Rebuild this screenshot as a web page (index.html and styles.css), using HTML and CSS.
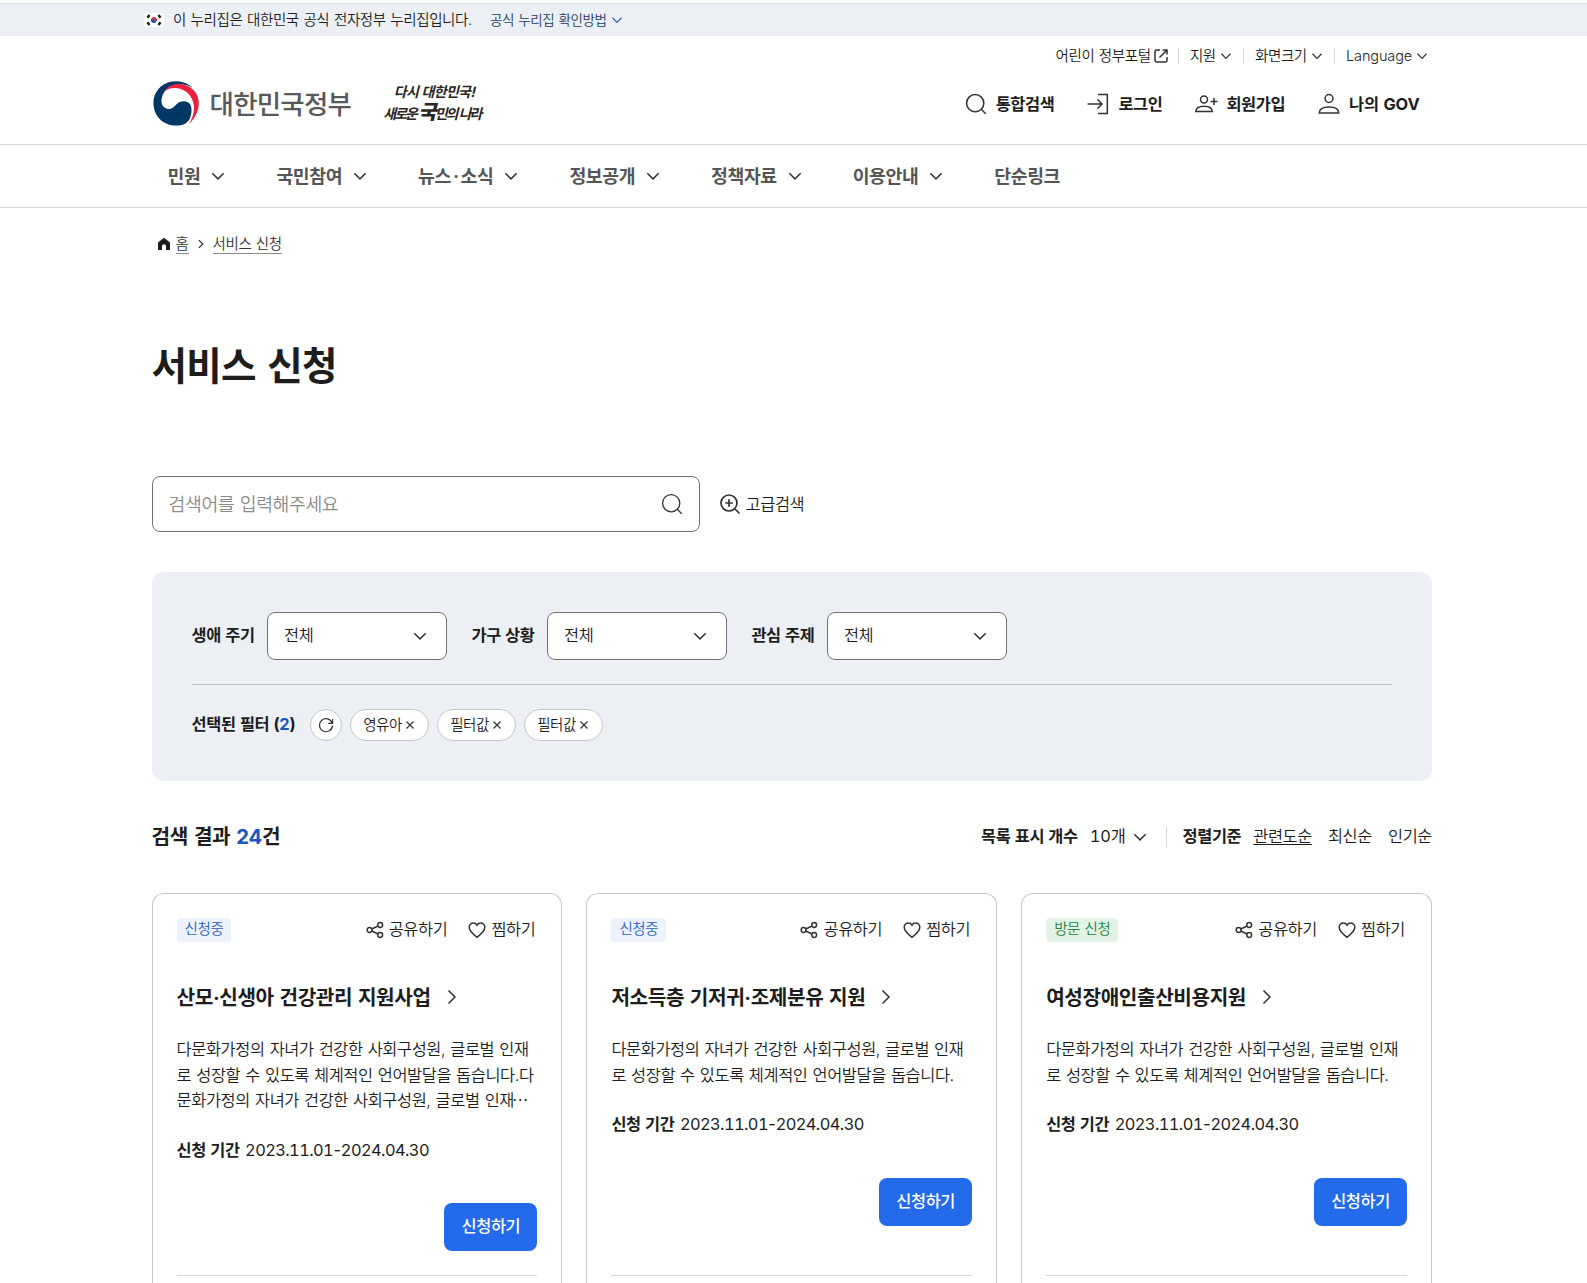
FILE: index.html
```html
<!DOCTYPE html>
<html lang="ko">
<head>
<meta charset="utf-8">
<title>서비스 신청</title>
<link rel="stylesheet" href="styles.css">
</head>
<body>
<svg class="sprite" aria-hidden="true">
  <symbol id="down" viewBox="0 0 20 20"><path d="M4.3 7.2 10 12.9l5.700-5.700"/></symbol>
  <symbol id="right" viewBox="0 0 20 20"><path d="M6.500 3.500 13 10l-6.500 6.500"/></symbol>
  <symbol id="search" viewBox="0 0 24 24"><circle cx="11.200" cy="11.200" r="8.600"/><path d="m17.300 17.300 4.400 4.400"/></symbol>
  <symbol id="share" viewBox="0 0 20 20"><circle cx="4.600" cy="10" r="2.400"/><circle cx="15.200" cy="5" r="2.400"/><circle cx="15.200" cy="15" r="2.400"/><path d="m6.800 9 6.200-3M6.800 11l6.200 3"/></symbol>
  <symbol id="heart" viewBox="0 0 20 20"><path d="M10 17.300C7 15 2.200 11.400 2.200 7.300a4.100 4.100 0 0 1 4.200-4.200c1.500 0 2.800.8 3.600 2.100.8-1.300 2.100-2.100 3.600-2.100a4.100 4.100 0 0 1 4.200 4.200c0 4.100-4.800 7.700-7.800 10z"/></symbol>
  <symbol id="close" viewBox="0 0 10 10"><path d="m1.500 1.500 7 7m0-7-7 7"/></symbol>
</svg>

<div class="notice">
  <div class="notice-in">
    <svg class="flag" viewBox="0 0 20 14"><rect width="20" height="14" rx="2" fill="#fff"/><path d="M7.200 5.900a3 3 0 0 1 5.600 2.200C11.500 9 10.800 7.600 10 7s-2-1.500-2.800-1.100z" fill="#d5303e"/><path d="M7.200 5.900a3 3 0 0 0 5.600 2.200C11.500 9 10.800 7.600 10 7s-2-1.500-2.800-1.100z" fill="#1b4ea0"/><path d="m3.500 4.700 2-2.700M14.500 2l2 2.700M3.500 9.300l2 2.700M14.500 12l2-2.700" stroke="#222" stroke-width="2.600"/></svg>
    <span class="notice-text">이 누리집은 대한민국 공식 전자정부 누리집입니다.</span>
    <span class="notice-link">공식 누리집 확인방법</span>
    <svg class="ico i16 blue"><use href="#down"/></svg>
  </div>
</div>

<header class="header">
  <div class="wrap header-in">
    <div class="brand">
      <svg class="emblem" viewBox="0 0 139 137"><circle cx="69.500" cy="68.500" r="67.500" fill="#fff"/><path d="M100 124C82 136 52 136 30 122 7 107-3 78 2 52 9 22 34 1 68 1c20 0 36 7 49 19C84 2 48 9 33 33c-11 18-12 38 2 47 13 8 24 1 34-10 14-15 44-13 45 13 1 20-5 33-14 41z" fill="#003764"/><path d="M34 31C50 4 87 3 113 21c29 21 34 67-7 108 25-38 19-78-9-98C76 17 50 18 34 31z" fill="#ee1f3c"/></svg>
      <span class="brand-name">대한민국정부</span>
      <div class="slogan"><span class="slogan-a">다시 대한민국!</span><span class="slogan-b">새로운 <b>국</b>민의 나라</span></div>
    </div>
    <div class="tools">
      <div class="utils">
        <span class="util">어린이 정부포털<svg class="ico ext" viewBox="0 0 16 16"><path d="M7 2H3.500A1.500 1.500 0 0 0 2 3.500v9A1.500 1.500 0 0 0 3.500 14h9a1.500 1.500 0 0 0 1.500-1.500V9M9.500 2H14v4.500M14 2 6.500 9.500"/></svg></span>
        <span class="util">지원<svg class="ico i16"><use href="#down"/></svg></span>
        <span class="util">화면크기<svg class="ico i16"><use href="#down"/></svg></span>
        <span class="util">Language<svg class="ico i16"><use href="#down"/></svg></span>
      </div>
      <div class="actions">
        <span class="action"><svg class="ico i24"><use href="#search"/></svg>통합검색</span>
        <span class="action"><svg class="ico i24" viewBox="0 0 24 24"><path d="M12 2.500h9.300v19H12M1.500 12H16M11.300 7.300 16 12l-4.700 4.700"/></svg>로그인</span>
        <span class="action"><svg class="ico i24" viewBox="0 0 24 24"><circle cx="10" cy="7.500" r="3.500"/><path d="M1.800 19.500c0-3.800 3.300-5.300 8.200-5.300s8.200 1.500 8.200 5.300zM20 6v7M16.500 9.500h7"/></svg>회원가입</span>
        <span class="action gov"><svg class="ico i24" viewBox="0 0 24 24"><circle cx="12" cy="6.500" r="3.900"/><path d="M2.300 20.900c0-4.200 3.900-6 9.700-6s9.700 1.800 9.700 6z"/></svg>나의 GOV</span>
      </div>
    </div>
  </div>
</header>

<nav class="nav">
  <div class="wrap nav-in">
    <span class="nav-item">민원<svg class="ico i20"><use href="#down"/></svg></span>
    <span class="nav-item">국민참여<svg class="ico i20"><use href="#down"/></svg></span>
    <span class="nav-item"><span>뉴스<span class="dot">·</span>소식</span><svg class="ico i20"><use href="#down"/></svg></span>
    <span class="nav-item">정보공개<svg class="ico i20"><use href="#down"/></svg></span>
    <span class="nav-item">정책자료<svg class="ico i20"><use href="#down"/></svg></span>
    <span class="nav-item">이용안내<svg class="ico i20"><use href="#down"/></svg></span>
    <span class="nav-item">단순링크</span>
  </div>
</nav>

<main class="wrap">
  <div class="crumbs">
    <svg class="home" viewBox="0 0 14 14"><path d="M7 .8 1 5.600V13h4V9.200a2 2 0 0 1 4 0V13h4V5.600z"/></svg>
    <span class="crumb">홈</span>
    <svg class="ico i12"><use href="#right"/></svg>
    <span class="crumb">서비스 신청</span>
  </div>
  <h1 class="title">서비스 신청</h1>

  <div class="search-row">
    <div class="search-box"><span class="placeholder">검색어를 입력해주세요</span><svg class="ico i24 thin"><use href="#search"/></svg></div>
    <span class="advanced"><svg class="ico i24 adv" viewBox="0 0 24 24"><circle cx="11" cy="11" r="8"/><path d="m17 17 4.500 4.500M11 7.200v7.600M7.200 11h7.600"/></svg>고급검색</span>
  </div>

  <section class="filters">
    <div class="filter-row">
      <span class="label">생애 주기</span><div class="select">전체<svg class="ico i20"><use href="#down"/></svg></div>
      <span class="label">가구 상황</span><div class="select">전체<svg class="ico i20"><use href="#down"/></svg></div>
      <span class="label">관심 주제</span><div class="select">전체<svg class="ico i20"><use href="#down"/></svg></div>
    </div>
    <div class="chosen">
      <span class="label chosen-label">선택된 필터 (<em>2</em>)</span>
      <span class="reset"><svg class="ico i16" viewBox="0 0 16 16"><path d="M14.200 6.200A6.500 6.500 0 1 0 14.500 8.600M14.600 2v4.400h-4.400"/></svg></span>
      <span class="chip">영유아<svg class="ico i10"><use href="#close"/></svg></span>
      <span class="chip">필터값<svg class="ico i10"><use href="#close"/></svg></span>
      <span class="chip">필터값<svg class="ico i10"><use href="#close"/></svg></span>
    </div>
  </section>

  <div class="result-bar">
    <h2 class="count">검색 결과 <em>24</em>건</h2>
    <div class="result-opts">
      <span class="label">목록 표시 개수</span><span class="per">10개</span><svg class="ico i20"><use href="#down"/></svg>
      <i class="bar"></i>
      <span class="label">정렬기준</span><span class="sort on">관련도순</span><span class="sort">최신순</span><span class="sort">인기순</span>
    </div>
  </div>

  <div class="cards">
    <article class="card">
      <div class="card-top"><span class="badge">신청중</span><span class="act share"><svg class="ico i20"><use href="#share"/></svg>공유하기</span><span class="act"><svg class="ico i20"><use href="#heart"/></svg>찜하기</span></div>
      <h3 class="card-title">산모·신생아 건강관리 지원사업<svg class="ico i20"><use href="#right"/></svg></h3>
      <p class="desc">다문화가정의 자녀가 건강한 사회구성원, 글로벌 인재<br>로 성장할 수 있도록 체계적인 언어발달을 돕습니다.다<br>문화가정의 자녀가 건강한 사회구성원, 글로벌 인재<span class="more">⋯</span></p>
      <p class="period"><b>신청 기간</b><span class="date">2023.11.01<span class="dash">-</span>2024.04.30</span></p>
      <span class="apply">신청하기</span>
      <div class="foot"></div>
    </article>
    <article class="card">
      <div class="card-top"><span class="badge">신청중</span><span class="act share"><svg class="ico i20"><use href="#share"/></svg>공유하기</span><span class="act"><svg class="ico i20"><use href="#heart"/></svg>찜하기</span></div>
      <h3 class="card-title">저소득층 기저귀·조제분유 지원<svg class="ico i20"><use href="#right"/></svg></h3>
      <p class="desc">다문화가정의 자녀가 건강한 사회구성원, 글로벌 인재<br>로 성장할 수 있도록 체계적인 언어발달을 돕습니다.</p>
      <p class="period"><b>신청 기간</b><span class="date">2023.11.01<span class="dash">-</span>2024.04.30</span></p>
      <span class="apply">신청하기</span>
      <div class="foot"></div>
    </article>
    <article class="card">
      <div class="card-top"><span class="badge green">방문 신청</span><span class="act share"><svg class="ico i20"><use href="#share"/></svg>공유하기</span><span class="act"><svg class="ico i20"><use href="#heart"/></svg>찜하기</span></div>
      <h3 class="card-title">여성장애인출산비용지원<svg class="ico i20"><use href="#right"/></svg></h3>
      <p class="desc">다문화가정의 자녀가 건강한 사회구성원, 글로벌 인재<br>로 성장할 수 있도록 체계적인 언어발달을 돕습니다.</p>
      <p class="period"><b>신청 기간</b><span class="date">2023.11.01<span class="dash">-</span>2024.04.30</span></p>
      <span class="apply">신청하기</span>
      <div class="foot"></div>
    </article>
  </div>
</main>
</body>
</html>
```
FILE: styles.css
```css
* { box-sizing: border-box; }
html, body { margin: 0; height: 1283px; overflow: hidden; }
body {
  background: #fff;
  color: #1d1d1d;
  font-family: Inter, "Noto Sans CJK KR", sans-serif;
  font-size: 16.4px;
  font-weight: 350;
  line-height: 1.5;
  letter-spacing: -0.025em;
  word-spacing: 0.05em;
  white-space: nowrap;
}
h1, h2, h3, p { margin: 0; }
em { font-style: normal; color: #1d56bc; letter-spacing: -0.01em; }
svg { flex: none; display: block; }
.sprite { position: absolute; width: 0; height: 0; }
.ico { fill: none; stroke: #333; stroke-width: 1.5; }
.i10 { width: 10px; height: 10px; stroke-width: 1.2; }
.i12 { width: 12px; height: 12px; stroke-width: 2.2; }
.i16 { width: 16px; height: 16px; }
.i20 { width: 20px; height: 20px; }
.i24 { width: 24px; height: 24px; }
.thin { stroke-width: 1.3; }
.blue { stroke: #2b5fc4; }
.wrap { width: 1280.4px; margin-left: 151.6px; }

.notice { margin-top: 3px; height: 33px; border-top: 1px solid #dcdfe3; background: #ecf0f5; }
.notice-in { margin-left: 144px; height: 32px; display: flex; align-items: center; font-size: 14.5px; }
.flag { width: 20px; height: 14px; }
.notice-text { margin-left: 9px; width: 299px; word-spacing: 0.07em; }
.notice-link { margin-left: 18px; width: 119px; font-size: 13.5px; color: #1d3a63; word-spacing: 0.06em; }

.header { height: 109px; border-bottom: 1px solid #d4d6d8; }
.header-in { display: flex; justify-content: space-between; height: 108px; }
.brand { display: flex; align-items: center; height: 47px; margin: 44px 0 0 1px; }
.emblem { width: 47px; height: 46px; }
.brand-name { margin-left: 10px; padding-top: 3px; font-size: 26.5px; font-weight: 500; color: #58595b; letter-spacing: -0.03em; width: 144px; }
.slogan { width: 100px; height: 44px; margin-left: 33px; display: flex; flex-direction: column; color: #2a2422; font-weight: 700; transform: skewX(-14deg); }
.slogan-a { font-size: 14px; line-height: 20px; padding-left: 5px; letter-spacing: -0.05em; }
.slogan-b { font-size: 14px; line-height: 20px; letter-spacing: -0.14em; }
.slogan-b b { font-size: 20px; }
.tools { width: 480px; margin-right: 2px; }
.utils { display: flex; justify-content: flex-end; align-items: center; height: 16px; margin-top: 12px; font-size: 14.5px; }
.util { display: flex; align-items: center; height: 16px; padding-left: 11px; margin-left: 9.3px; border-left: 1px solid #d4d6d8; }
.util:first-child { border-left: 0; }
.util .i16 { margin-left: 2px; }
.util:last-child { letter-spacing: -0.01em; }
.util .ext { width: 16px; height: 16px; margin-left: 2px; }
.actions { display: flex; justify-content: flex-end; gap: 32px; margin-top: 28px; padding-right: 10.5px; height: 24px; font-weight: 700; }
.action { display: flex; align-items: center; gap: 8px; }
.gov { letter-spacing: -0.01em; }

.nav { height: 63px; border-bottom: 1px solid #d4d6d8; }
.nav-in { display: flex; gap: 16px; height: 62px; padding-left: 16px; }
.nav-item { display: flex; align-items: center; gap: 8px; margin-right: 32px; padding-top: 1px; font-size: 18.3px; font-weight: 700; color: #555; }
.nav-item svg { margin-bottom: 1px; }
.dot { padding: 0 2px; }

.crumbs { display: flex; align-items: center; height: 22px; margin-top: 25px; padding-left: 5px; font-size: 14.5px; color: #333; }
.home { width: 14px; height: 14px; fill: #1d1d1d; }
.crumb { margin: 0 0 1px 5px; height: 21px; line-height: 22px; border-bottom: 1px solid #8a8a8a; }
.crumbs .i12 { margin: 0 1px 0 6px; }
.title { margin-top: 81px; height: 60px; font-size: 38.6px; line-height: 60px; font-weight: 700; letter-spacing: -0.02em; word-spacing: 0.08em; }

.search-row { display: flex; align-items: center; margin-top: 80px; }
.search-box { width: 548px; height: 56px; border: 1px solid #717171; border-radius: 8px; padding: 0 15px 0 16px; display: flex; align-items: center; justify-content: space-between; font-size: 18.3px; color: #8a8a8a; }
.placeholder { padding-top: 2px; }
.advanced { display: flex; align-items: center; margin-left: 18px; gap: 4px; }
.adv { stroke-width: 1.7; }

.filters { margin-top: 40px; height: 209px; padding: 40px; background: #ecf0f5; border-radius: 12px; }
.filter-row { display: flex; align-items: center; height: 73px; padding-bottom: 24px; border-bottom: 1px solid #bfc2c5; }
.label { font-weight: 700; padding-bottom: 2px; }
.filter-row .label { width: 63.5px; }
.select { display: flex; align-items: center; justify-content: space-between; width: 180px; height: 48px; margin: 0 24.4px 0 12px; padding: 0 16px 2px; background: #fff; border: 1px solid #717171; border-radius: 8px; }
.select svg { margin-bottom: -2px; }
.chosen { display: flex; align-items: center; gap: 8px; margin-top: 24px; height: 32px; }
.chosen-label { width: 110px; }
.reset { display: flex; align-items: center; justify-content: center; width: 32px; height: 32px; border: 1px solid #c6c6c6; border-radius: 50%; background: #fff; }
.reset .ico { stroke-width: 1.2; }
.chip { display: flex; align-items: center; justify-content: center; gap: 3px; width: 79px; height: 32px; font-size: 14.5px; border: 1px solid #c6c6c6; border-radius: 16px; background: #fff; }

.result-bar { display: flex; align-items: center; justify-content: space-between; height: 32px; margin-top: 40px; }
.count { font-size: 20.2px; font-weight: 700; word-spacing: 0.08em; }
.result-opts { display: flex; align-items: center; }
.per { margin: 0 4px 0 12px; padding-bottom: 2px; letter-spacing: -0.01em; font-weight: 400; font-feature-settings: "tnum"; }
.bar { width: 1px; height: 20px; background: #d4d6d8; margin: 0 16px; }
.sort { margin-left: 16px; padding-bottom: 2px; }
.sort.on { margin-left: 12px; text-decoration: underline; text-underline-offset: 2px; }

.cards { display: grid; grid-template-columns: repeat(3, 1fr); gap: 24px; margin-top: 40px; }
.card { display: flex; flex-direction: column; height: 390px; padding: 24px 24px 0; border: 1px solid #c6c6c6; border-bottom: 0; border-radius: 12px 12px 0 0; }
.card-top { display: flex; align-items: center; height: 24px; }
.badge { padding: 0 8px; height: 24px; line-height: 22px; border-radius: 4px; font-size: 14.5px; background: #ecf3fe; color: #2f5fc0; }
.badge.green { background: #e2f3e5; color: #258440; }
.act { display: flex; align-items: center; gap: 4px; margin-left: 20px; padding-bottom: 2px; }
.act svg { margin-bottom: -2px; }
.act:last-child { margin-right: 2px; }
.share { margin-left: auto; }
.card-title { display: flex; align-items: center; gap: 11px; height: 32px; margin-top: 40px; font-size: 20.2px; font-weight: 700; word-spacing: 0.07em; }
.card-title svg { margin-bottom: 2px; }
.desc { margin-top: 23px; line-height: 25.5px; }
.more { margin-left: -2px; }
.period { display: flex; gap: 5.5px; margin-top: 24px; line-height: 25.5px; }
.date { letter-spacing: -0.035em; font-weight: 400; font-feature-settings: "tnum"; }
.dash { margin: 0 -1.2px; }
.apply { align-self: flex-end; width: 93px; height: 48px; margin-top: 40px; line-height: 46px; text-align: center; color: #fff; background: #246beb; border-radius: 8px; font-weight: 500; }
.foot { margin-top: auto; height: 8px; border-top: 1px solid #d4d6d8; }
```
